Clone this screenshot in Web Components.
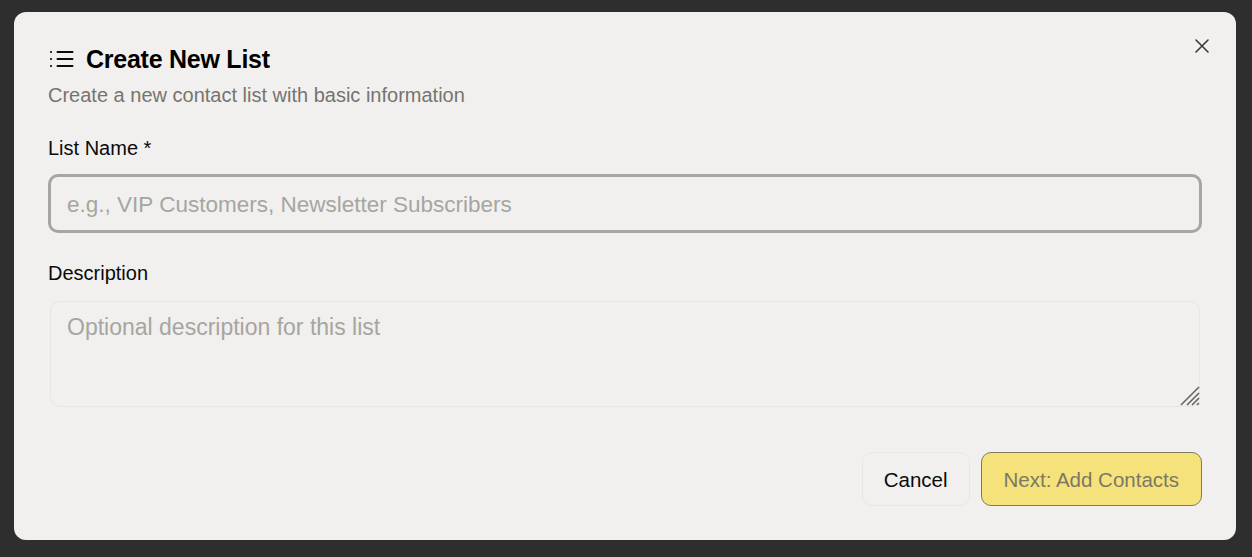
<!DOCTYPE html>
<html>
<head>
<meta charset="utf-8">
<title>Create New List</title>
<style>
	html, body {
		margin: 0;
		height: 100%;
		background: #2e2e2e;
		font-family: "Liberation Sans", Arial, sans-serif;
		overflow: hidden;
	}
</style>
</head>
<body>
<list-dialog>
	<span slot="title">Create New List</span>
	<span slot="subtitle">Create a new contact list with basic information</span>
	<form-field label="List Name *" placeholder="e.g., VIP Customers, Newsletter Subscribers" focused></form-field>
	<form-field label="Description" placeholder="Optional description for this list" multiline></form-field>
	<dialog-button slot="actions">Cancel</dialog-button>
	<dialog-button slot="actions" primary>Next: Add Contacts</dialog-button>
</list-dialog>

<script>
class ListDialog extends HTMLElement {
	constructor() {
		super();
		this.attachShadow({ mode: 'open' });
		this.shadowRoot.innerHTML = /*html*/ `
		<style>
			:host {
				display: block;
				box-sizing: border-box;
				height: 100%;
				padding: 12px 16px 17px 14px;
			}
			.panel {
				position: relative;
				box-sizing: border-box;
				height: 100%;
				background: #f1f0ee;
				border-radius: 12px;
				padding: 33px 34px 34px 34px;
				display: flex;
				flex-direction: column;
			}
			header {
				display: flex;
				align-items: center;
				gap: 12px;
				height: 28px;
				font-size: 25px;
				font-weight: 700;
				letter-spacing: -0.25px;
				color: #000;
			}
			p {
				margin: 8px 0 0;
				font-size: 20px;
				line-height: 28px;
				color: #76746f;
			}
			.fields {
				display: flex;
				flex-direction: column;
				gap: 26px;
				margin-top: 25px;
			}
			.actions {
				display: flex;
				justify-content: flex-end;
				gap: 11px;
				margin-top: auto;
			}
			.close {
				position: absolute;
				top: 26px;
				right: 26px;
				width: 16px;
				height: 16px;
				color: #3a3a3a;
			}
		</style>
		<div class="panel">
			<svg class="close" viewBox="0 0 16 16" fill="none" stroke="currentColor" stroke-width="1.6" stroke-linecap="round">
				<path d="M2 2l12 12M14 2L2 14"/>
			</svg>
			<header>
				<svg width="26" height="24" viewBox="0 0 26 24" fill="none" stroke="#0a0a0a" stroke-linecap="round">
					<path stroke-width="2" d="M9.5 5h15M9.5 12h15M9.5 19h15"/>
					<path stroke-width="2" d="M3 5h.1M3 12h.1M3 19h.1"/>
				</svg>
				<slot name="title"></slot>
			</header>
			<p><slot name="subtitle"></slot></p>
			<div class="fields"><slot></slot></div>
			<div class="actions"><slot name="actions"></slot></div>
		</div>`;
	}
}

class FormField extends HTMLElement {
	constructor() {
		super();
		this.attachShadow({ mode: 'open' });
	}

	connectedCallback() {
		const label = this.getAttribute('label');
		const placeholder = this.getAttribute('placeholder');
		const multiline = this.hasAttribute('multiline');
		const control = multiline
			? `<div class="area"><textarea placeholder="${placeholder}"></textarea>
				<svg class="grip" width="20" height="20" viewBox="0 0 20 20" stroke="#666562" stroke-width="1.6" fill="none">
					<path d="M1 19L19 1M7 19L19 7M12 19l7-7M17 19l2-2"/>
				</svg></div>`
			: `<input placeholder="${placeholder}">`;
		this.shadowRoot.innerHTML = /*html*/ `
		<style>
			:host {
				display: block;
				font-size: 20px;
				color: #0a0a0a;
			}
			label {
				display: block;
				line-height: 28px;
				margin-bottom: 12px;
			}
			:host([multiline]) label {
				margin-bottom: 14px;
			}
			input, textarea {
				display: block;
				box-sizing: border-box;
				width: 100%;
				margin: 0;
				background: transparent;
				font-family: inherit;
				outline: none;
				color: inherit;
			}
			input {
				height: 59px;
				padding: 2px 16px 0;
				font-size: 22.5px;
				border: 3px solid #a6a5a1;
				border-radius: 10px;
			}
			.area {
				position: relative;
				margin: 0 2px;
			}
			textarea {
				height: 106px;
				padding: 11px 16px;
				font-size: 23px;
				line-height: 28px;
				border: 1px solid #e6e5e3;
				border-radius: 10px;
				resize: none;
			}
			.grip {
				position: absolute;
				right: 0;
				bottom: 1px;
			}
			::placeholder {
				color: #a6a5a1;
				opacity: 1;
			}
		</style>
		<label>${label}</label>
		${control}`;
	}
}

class DialogButton extends HTMLElement {
	constructor() {
		super();
		this.attachShadow({ mode: 'open' });
		this.shadowRoot.innerHTML = /*html*/ `
		<style>
			:host {
				display: inline-flex;
				align-items: center;
				justify-content: center;
				box-sizing: border-box;
				height: 54px;
				padding: 1px 21px 0;
				font-size: 20.5px;
				border-radius: 10px;
				border: 1px solid #e8e7e5;
				color: #0a0a0a;
			}
			:host([primary]) {
				padding: 1px 22px 0;
				background: #f6e27a;
				border-color: #7f7a5a;
				color: #7b7868;
			}
		</style>
		<slot></slot>`;
	}
}

customElements.define('list-dialog', ListDialog);
customElements.define('form-field', FormField);
customElements.define('dialog-button', DialogButton);
</script>
</body>
</html>
